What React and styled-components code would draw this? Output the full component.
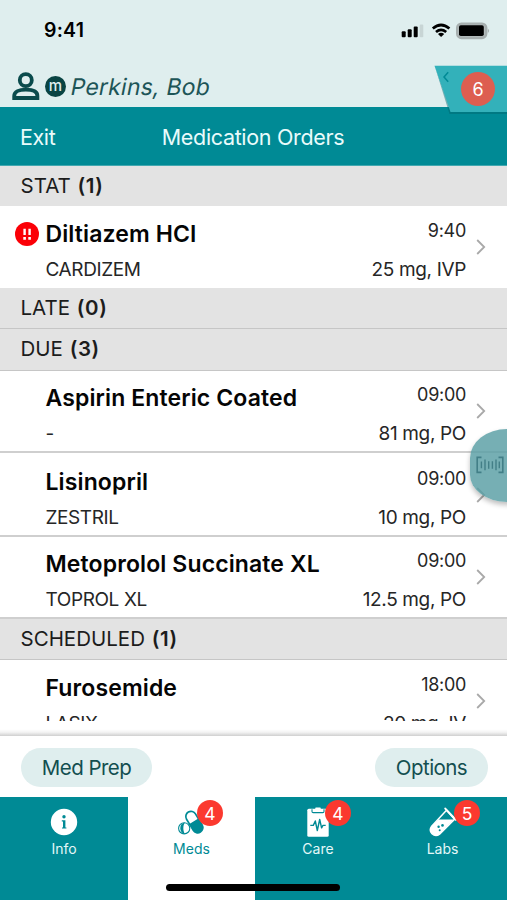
import styled, { createGlobalStyle } from "styled-components"

const sections = [
  {
    name: "STAT",
    count: 1,
    height: 40,
    orders: [
      {
        drug: "Diltiazem HCI",
        brand: "CARDIZEM",
        time: "9:40",
        dose: "25 mg, IVP",
        urgent: true,
        height: 82,
        top: 13,
      },
    ],
  },
  { name: "LATE", count: 0, height: 41, line: 1, orders: [] },
  {
    name: "DUE",
    count: 3,
    height: 42,
    line: 1,
    orders: [
      {
        drug: "Aspirin Enteric Coated",
        brand: "-",
        time: "09:00",
        dose: "81 mg, PO",
        height: 82,
        top: 12,
        line: 2,
      },
      {
        drug: "Lisinopril",
        brand: "ZESTRIL",
        time: "09:00",
        dose: "10 mg, PO",
        height: 84,
        top: 14,
        line: 2,
      },
      {
        drug: "Metoprolol Succinate XL",
        brand: "TOPROL XL",
        time: "09:00",
        dose: "12.5 mg, PO",
        height: 82,
        top: 12,
        line: 2,
      },
    ],
  },
  {
    name: "SCHEDULED",
    count: 1,
    height: 41,
    line: 1,
    orders: [
      {
        drug: "Furosemide",
        brand: "LASIX",
        time: "18:00",
        dose: "20 mg, IV",
        height: 82,
        top: 13,
      },
    ],
  },
]

const InfoIcon = () => (
  <svg width="28" height="30" viewBox="0 0 28 30">
    <circle cx="14" cy="15" r="13.2" fill="#fff" />
    <circle cx="14" cy="9.8" r="1.7" fill="#008a95" />
    <path d="M11.8 13.2H15.4V20.4H16.4V21.6H12V20.4H13V14.4H11.8Z" fill="#008a95" />
  </svg>
)

const MedsIcon = () => (
  <svg width="28" height="30" viewBox="0 0 28 30">
    <g transform="translate(16.3 15) rotate(-31)">
      <path d="M-5.2 0V-6.4A5.2 5.2 0 0 1 5.2 -6.4V0Z" fill="#fff" stroke="#008a95" strokeWidth="1.7" />
      <path d="M-6 0V6.6A6 6 0 0 0 6 6.6V0Z" fill="#008a95" />
    </g>
    <circle cx="6.2" cy="21.3" r="5.6" fill="#fff" stroke="#008a95" strokeWidth="1.1" />
    <path d="M7 15.6C4.8 18.4 4.8 24.2 7 27A5.8 5.8 0 0 1 7 15.6Z" fill="#008a95" />
  </svg>
)

const CareIcon = () => (
  <svg width="28" height="30" viewBox="0 0 28 30">
    <rect x="3.3" y="1.8" width="21.4" height="28" rx="1.5" fill="#fff" />
    <path d="M8 2.2V4.5Q8 5.6 9.2 5.6H18.8Q20 5.6 20 4.5V2.2" fill="#fff" stroke="#008a95" strokeWidth="1.1" />
    <path d="M10.5 2.2Q11.4 2.2 11.6 .6H16.4Q16.6 2.2 17.5 2.2Z" fill="#fff" />
    <path
      d="M6.3 18.4H9.3L11.3 14L13.3 23.5L15.7 12.5L17.6 20.8L19 18.4H21.7"
      fill="none"
      stroke="#008a95"
      strokeWidth="1.4"
      strokeLinejoin="round"
    />
  </svg>
)

const LabsIcon = () => (
  <svg width="28" height="30" viewBox="0 0 28 30">
    <path
      d="M17.5 3.2L2.7 19.2Q-.3 23.4 3 26.8Q6.7 30.1 10.6 27.1L25.6 12.3Z"
      fill="none"
      stroke="#fff"
      strokeWidth="1.5"
    />
    <path d="M9.7 12.5H24.8L10.6 27.1Q6.7 30.1 3 26.8Q-.3 23.4 2.7 19.2Z" fill="#fff" />
    <path d="M16.3 1.6L26.8 12.8" stroke="#fff" strokeWidth="2" strokeLinecap="round" />
    <circle cx="9.6" cy="19.8" r="1.2" fill="#008a95" />
    <circle cx="13.5" cy="18.4" r="1.3" fill="#008a95" />
    <circle cx="10.7" cy="23.2" r="1" fill="#008a95" />
  </svg>
)

const tabs = [
  { label: "Info", icon: <InfoIcon /> },
  { label: "Meds", icon: <MedsIcon />, badge: 4, left: 69, active: true },
  { label: "Care", icon: <CareIcon />, badge: 4, left: 70 },
  { label: "Labs", icon: <LabsIcon />, badge: 5, left: 73 },
]

const StatusIcons = () => (
  <svg width="90" height="20" viewBox="400 20 90 20">
    <rect x="401.7" y="31.3" width="4" height="6" rx="1" />
    <rect x="407.7" y="29.3" width="4" height="8" rx="1" />
    <rect x="413.7" y="26.6" width="4" height="10.7" rx="1" />
    <rect x="419.7" y="24.5" width="3.6" height="12.8" rx="1" fill="#c8d5d5" />
    <g fill="none" stroke="#000" strokeWidth="2.7">
      <path d="M432.8 28.6Q441 21.4 449.4 28.6" />
      <path d="M436 32Q441 27.8 446.2 32" />
    </g>
    <path d="M438 34Q441 31.6 444.2 34L441.1 37.1Z" />
    <rect x="457.2" y="23.6" width="29" height="14.4" rx="4.2" fill="#b4bcbc" stroke="#a7afaf" strokeWidth="2.4" />
    <rect x="459" y="25.3" width="24.8" height="10.8" rx="1.8" />
    <path d="M487.8 28.4Q490.3 30.7 487.8 33Z" fill="#a7afaf" />
  </svg>
)

const App = () => {
  return (
    <Screen>
      <GlobalStyle />
      <StatusBar>
        <Clock>9:41</Clock>
        <StatusIcons />
      </StatusBar>

      <PatientBar>
        <svg width="28" height="29" viewBox="0 0 28 29" fill="none" stroke="#0a4b4c" strokeWidth="3.8">
          <circle cx="13.8" cy="8.2" r="6" />
          <path d="M2.2 26V24C2.2 19.7 7.2 17.7 13.8 17.7S25.4 19.7 25.4 24V26Z" />
        </svg>
        <Initial>m</Initial>
        <PatientName>Perkins, Bob</PatientName>
      </PatientBar>

      <Flag>
        <svg width="76" height="54" viewBox="0 0 76 54">
          <path d="M4 2L18.5 49H76V46H20Z" fill="#00646d" opacity=".45" />
          <path d="M3.5 .7H76V47H19.5Z" fill="#33b1ba" />
          <path d="M17.2 7.2L13 12L17.2 16.8" fill="none" stroke="#008a95" strokeWidth="1.5" />
        </svg>
        <FlagCount>6</FlagCount>
      </Flag>

      <NavBar>
        <Exit>Exit</Exit>
        <NavTitle>Medication Orders</NavTitle>
      </NavBar>

      <List>
        {sections.map((section) => (
          <section key={section.name}>
            <SectionHeader $height={section.height} $line={section.line}>
              {section.name} <b>({section.count})</b>
            </SectionHeader>
            {section.orders.map((order) => (
              <Order key={order.drug} $height={order.height} $top={order.top} $line={order.line}>
                <Marker>
                  {order.urgent && (
                    <svg width="24" height="24" viewBox="0 0 24 24">
                      <circle cx="12" cy="12" r="12" fill="#fb0007" />
                      <path d="M9.6 6.8V13M14.6 6.8V13" stroke="#fff" strokeWidth="2.4" />
                      <path d="M9.6 15V17.8M14.6 15V17.8" stroke="#fff" strokeWidth="2.6" />
                    </svg>
                  )}
                </Marker>
                <Names>
                  <h2>{order.drug}</h2>
                  <p>{order.brand}</p>
                </Names>
                <Details>
                  <Time>{order.time}</Time>
                  <Dose>{order.dose}</Dose>
                </Details>
                <Chevron width="10" height="16" viewBox="0 0 10 16">
                  <path d="M1.2 1L8.2 8L1.2 15" fill="none" stroke="#a9a9a9" strokeWidth="1.8" />
                </Chevron>
              </Order>
            ))}
          </section>
        ))}
      </List>

      <ScanButton>
        <svg width="28" height="18" viewBox="0 0 28 18" fill="none" stroke="#427f87" strokeWidth="1.6">
          <path d="M5.5 1.4H1.2V16.4H5.5M22.5 1.4H26.8V16.4H22.5" />
          <path d="M5.4 5.5V12.2M9 3.5V14.2M12.7 5.2V12.8M16.4 5.2V12.8M20 3.5V14.2M23.3 5.5V12.2" strokeWidth="1.4" />
        </svg>
      </ScanButton>

      <Fade />
      <Actions>
        <Pill $width={131}>Med Prep</Pill>
        <Pill $width={113}>Options</Pill>
      </Actions>

      <TabBar>
        {tabs.map((tab) => (
          <Tab key={tab.label} $active={tab.active}>
            {tab.icon}
            <span>{tab.label}</span>
            {tab.badge && <Badge $left={tab.left}>{tab.badge}</Badge>}
          </Tab>
        ))}
      </TabBar>
      <HomeIndicator />
    </Screen>
  )
}

const GlobalStyle = createGlobalStyle`
  * {
    box-sizing: border-box;
    margin: 0;
    padding: 0;
  }

  body {
    background-color: #fff;
    font-family: Inter, "Liberation Sans", sans-serif;
  }

  svg {
    display: block;
    flex-shrink: 0;
  }
`

const Screen = styled.div`
  position: relative;
  display: flex;
  flex-direction: column;
  width: 507px;
  height: 900px;
  overflow: hidden;
  background-color: #fff;
`

const StatusBar = styled.div`
  display: flex;
  flex-shrink: 0;
  align-items: center;
  justify-content: space-between;
  height: 60px;
  padding: 0 17px 0 44px;
  background-color: #dfeeee;
`

const Clock = styled.div`
  font-size: 19.5px;
  font-weight: 600;
  letter-spacing: 0.2px;
`

const PatientBar = styled.header`
  display: flex;
  flex-shrink: 0;
  align-items: center;
  height: 47px;
  padding: 6px 0 0 12px;
  background-color: #dfeeee;
`

const Initial = styled.div`
  width: 21px;
  height: 21px;
  margin: 0 5px;
  border-radius: 50%;
  background-color: #0a4443;
  color: #dfeeee;
  font-size: 15px;
  font-weight: 500;
  line-height: 19px;
  text-align: center;
`

const PatientName = styled.div`
  color: #1d5557;
  font-size: 23px;
  letter-spacing: 0.2px;
  transform: skewX(-11deg);
`

const Flag = styled.div`
  position: absolute;
  top: 65px;
  right: 0;
  width: 76px;
  height: 54px;
`

const FlagCount = styled.div`
  position: absolute;
  top: 7px;
  left: 30px;
  width: 34px;
  height: 34px;
  border-radius: 50%;
  background-color: #dd5e50;
  color: #fff;
  font-size: 18px;
  line-height: 35px;
  text-align: center;
`

const NavBar = styled.nav`
  display: grid;
  flex-shrink: 0;
  grid-template-columns: 142px 1fr 142px;
  align-items: center;
  height: 59px;
  padding-top: 2px;
  border-bottom: 1px solid #42a8b0;
  background-color: #008a95;
  color: #e9fbfb;
`

const Exit = styled.div`
  padding-left: 20px;
  font-size: 21.5px;
  letter-spacing: -0.4px;
`

const NavTitle = styled.h1`
  font-size: 21.5px;
  font-weight: 400;
  letter-spacing: -0.33px;
  text-align: center;
  text-indent: -1px;
  white-space: nowrap;
`

const List = styled.main`
  flex-shrink: 0;
  height: 555px;
  overflow: hidden;
`

const SectionHeader = styled.h3`
  height: ${(props) => props.$height}px;
  padding-left: 20.5px;
  border-bottom: ${(props) => props.$line || 0}px solid #c6c6c6;
  background-color: #e3e3e3;
  color: #1c1c1c;
  font-size: 20.5px;
  font-weight: 400;
  line-height: 40px;

  b {
    margin-left: 1px;
    font-weight: 600;
    letter-spacing: 0.6px;
  }
`

const Order = styled.article`
  display: flex;
  height: ${(props) => props.$height}px;
  padding-top: ${(props) => props.$top}px;
  padding-right: 21px;
  border-bottom: ${(props) => props.$line || 0}px solid #cfcfcf;
  background-color: #fff;
`

const Marker = styled.div`
  width: 45.5px;
  padding: 3px 0 0 15px;
`

const Names = styled.div`
  flex: 1;
  white-space: nowrap;

  h2 {
    color: #050505;
    font-size: 23px;
    font-weight: 600;
    letter-spacing: 0.12px;
    line-height: 30px;
  }

  p {
    margin-top: 9px;
    color: #262626;
    font-size: 19px;
    letter-spacing: -0.4px;
    line-height: 24px;
  }
`

const Details = styled.div`
  color: #262626;
  line-height: 24px;
  text-align: right;
`

const Time = styled.div`
  font-size: 18px;
  letter-spacing: -0.3px;
`

const Dose = styled.div`
  margin-top: 15px;
  font-size: 19px;
  letter-spacing: -0.35px;
`

const Chevron = styled.svg`
  margin: 20px 0 0 10px;
`

const ScanButton = styled.div`
  position: absolute;
  top: 429px;
  right: -14px;
  width: 51px;
  height: 73px;
  padding: 27px 0 0 6px;
  border-radius: 37px 0 0 37px / 29px 0 0 27px;
  background-color: rgba(88, 157, 163, 0.82);
  box-shadow: 0 3px 5px rgba(0, 0, 0, 0.25);
`

const Fade = styled.div`
  flex-shrink: 0;
  height: 15px;
  background: linear-gradient(to bottom, #fff 55%, #f3f3f3 75%, #cfcfcf 100%);
`

const Actions = styled.div`
  display: flex;
  flex-shrink: 0;
  align-items: center;
  justify-content: space-between;
  height: 61px;
  padding: 2px 19px 0 21px;
`

const Pill = styled.button`
  width: ${(props) => props.$width}px;
  height: 39px;
  border: 0;
  border-radius: 20px;
  background-color: #dfeeee;
  color: #134e50;
  font-family: inherit;
  font-size: 20.5px;
  letter-spacing: -0.55px;
`

const TabBar = styled.footer`
  display: grid;
  flex-shrink: 0;
  grid-template-columns: 128px 127px 126px 123px;
  height: 103px;
  background-color: #008a95;
`

const Tab = styled.div`
  position: relative;
  display: flex;
  flex-direction: column;
  align-items: center;
  padding-top: 10px;
  background-color: ${(props) => (props.$active ? "#fff" : "#008a95")};
  color: ${(props) => (props.$active ? "#008a95" : "#e4f8f8")};
  font-size: 14px;
  line-height: 23px;
`

const Badge = styled.div`
  position: absolute;
  top: 3px;
  left: ${(props) => props.$left}px;
  width: 26px;
  height: 26px;
  border-radius: 50%;
  background-color: #fb392f;
  color: #fff;
  font-size: 17.5px;
  line-height: 27px;
  text-align: center;
`

const HomeIndicator = styled.div`
  position: absolute;
  bottom: 9px;
  left: 166px;
  width: 174px;
  height: 7px;
  border-radius: 4px;
  background-color: #000;
`

export default App
